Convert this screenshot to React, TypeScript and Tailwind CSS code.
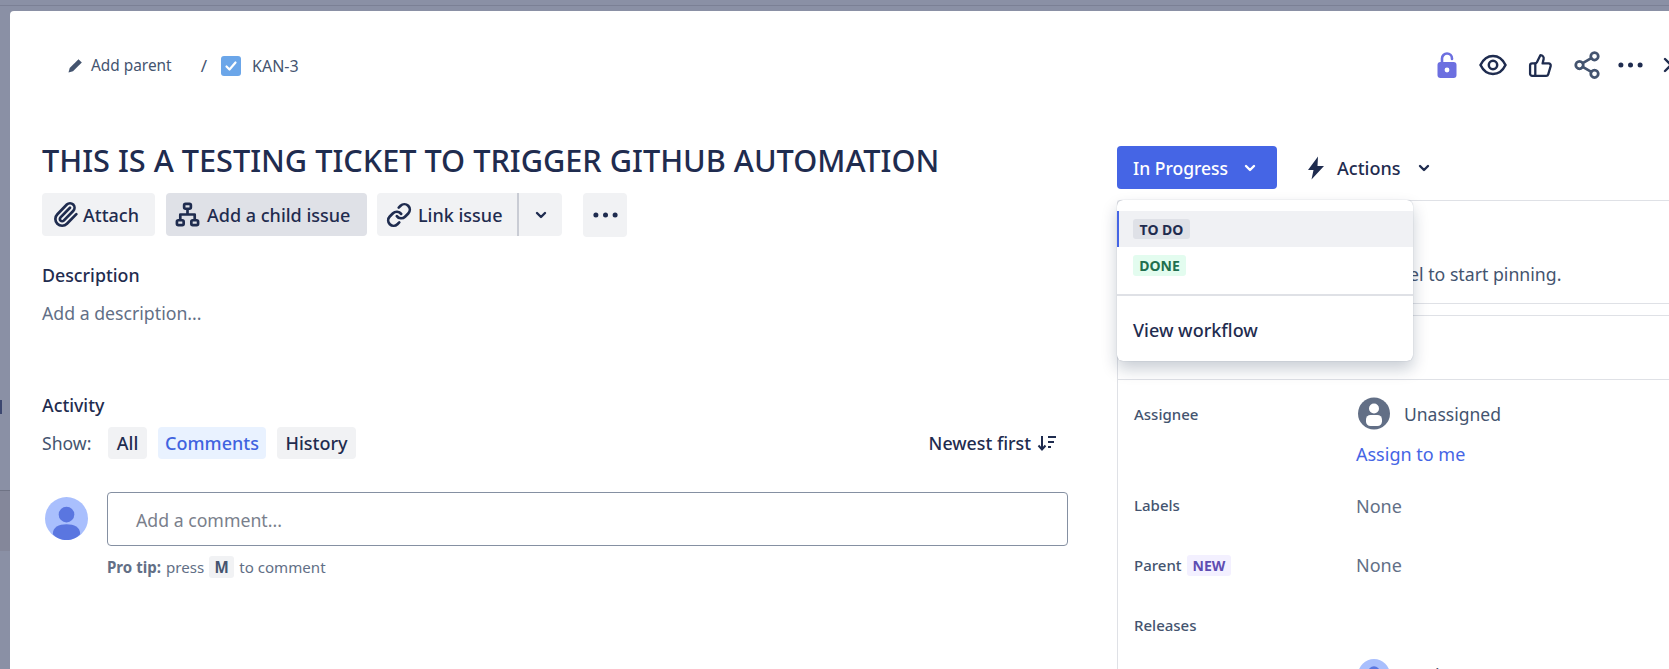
import React from "react";
import { Paperclip, Link as LinkIcon, ThumbsUp, Share2, X } from "lucide-react";

const Chevron = ({ className = "" }: { className?: string }) => (
  <svg viewBox="0 0 12 8" className={className} fill="none" stroke="currentColor" strokeWidth="2.4" strokeLinecap="round" strokeLinejoin="round">
    <path d="M2 2l4 4 4-4" />
  </svg>
);

const Dots = ({ className = "" }: { className?: string }) => (
  <svg viewBox="0 0 26 6" className={className} fill="currentColor">
    <circle cx="3" cy="3" r="2.6" />
    <circle cx="13" cy="3" r="2.6" />
    <circle cx="23" cy="3" r="2.6" />
  </svg>
);

const Avatar = ({ className = "" }: { className?: string }) => (
  <svg viewBox="0 0 44 44" className={className}>
    <circle cx="22" cy="22" r="22" fill="#a9bffd" />
    <circle cx="22" cy="18" r="8" fill="#5a76e0" />
    <path d="M8 38c0-7 6-10 14-10s14 3 14 10c-3.5 3.6-8.5 6-14 6s-10.500-2.400-14-6z" fill="#5a76e0" />
  </svg>
);

const Row = ({ label, children, h }: { label: React.ReactNode; children: React.ReactNode; h: string }) => (
  <div className={`flex ${h}`}>
    <div className="w-[222px] shrink-0 text-[15px] font-medium text-[#44546f] leading-[24px]">{label}</div>
    <div className="text-[18px] leading-[24px] text-[#626f86]">{children}</div>
  </div>
);

export default function App() {
  return (
    <div className="relative h-[669px] w-[1669px] overflow-hidden bg-[#8a90a5] pt-[11px] pl-[10px] [font-family:'Noto_Sans',sans-serif] text-[#172b4d]">
      <div className="absolute left-0 right-0 top-[5px] h-px bg-[#7b8095]" />
      <div className="absolute left-0 top-[400px] h-[14px] w-[2px] bg-[#3c4770]" />
      <div className="absolute left-0 top-[490px] h-px w-[10px] bg-[#6f7385]" />
      <div className="absolute left-0 top-[491px] h-[60px] w-[10px] bg-[#84879a]" />
      <div className="relative flex h-[658px] flex-col overflow-hidden rounded-tl-[4px] bg-white">
        <header className="flex h-[108px] shrink-0 items-center">
          <div className="ml-[57px] flex w-[1370px] shrink-0 items-center pt-[2px] text-[#44546f]">
            <svg viewBox="0 0 16 16" className="h-[16px] w-[16px] text-[#44546f]" fill="currentColor">
              <path d="M11.500 1.200l3.300 3.300-8.800 8.800-4.500 1.300 1.200-4.600z" />
            </svg>
            <span className="ml-[8px] text-[15.4px]">Add parent</span>
            <span className="ml-[29px] text-[17px]">/</span>
            <svg viewBox="0 0 20 20" className="ml-[14px] h-[20px] w-[20px]">
              <rect width="20" height="20" rx="3" fill="#6ba6e9" />
              <path d="M5.500 10.500l3 3 6-7" fill="none" stroke="#fff" strokeWidth="2.200" strokeLinecap="round" strokeLinejoin="round" />
            </svg>
            <span className="ml-[11px] text-[16px]">KAN-3</span>
          </div>
          <div className="flex shrink-0 items-center">
            <svg viewBox="0 0 20 26" className="h-[26px] w-[20px]">
              <path d="M5 11V6.500a5 5 0 0 1 10 0V7" fill="none" stroke="#6c6fe0" strokeWidth="2.600" strokeLinecap="round" />
              <rect x="0.500" y="10" width="19" height="16" rx="3" fill="#6c6fe0" />
              <circle cx="10" cy="18" r="2.400" fill="#fff" />
            </svg>
            <svg viewBox="0 0 28 22" className="ml-[22px] h-[22px] w-[28px]" fill="none" stroke="#1f2c4f" strokeWidth="2.500">
              <path d="M1.500 11C4.500 4.800 9 2 14 2s9.500 2.800 12.500 9c-3 6.200-7.500 9-12.500 9S4.500 17.200 1.500 11z" />
              <circle cx="14" cy="11" r="4.200" />
            </svg>
            <ThumbsUp className="ml-[21px] h-[25px] w-[25px] text-[#1f2c4f]" strokeWidth={2.2} />
            <Share2 className="ml-[19px] h-[30px] w-[30px] text-[#44546f]" strokeWidth={2.2} />
            <Dots className="ml-[16px] h-[6px] w-[25px] text-[#1f2c4f]" />
            <X className="ml-[16px] h-[24px] w-[24px] shrink-0 text-[#1f2c4f]" strokeWidth={2.4} />
          </div>
        </header>

        <div className="flex min-h-0 flex-1">
          <main className="w-[1107px] shrink-0 pl-[32px]">
            <h1 className="mt-[19px] whitespace-nowrap text-[30.7px] font-medium leading-[44px] text-[#1f2c4f]">
              THIS IS A TESTING TICKET TO TRIGGER GITHUB AUTOMATION
            </h1>
            <div className="mt-[11px] flex items-start">
              <button className="flex h-[43px] w-[113px] items-center gap-[4px] rounded-[4px] bg-[#f1f2f4] pl-[10px] text-[18px] font-medium text-[#1f2c4f]">
                <Paperclip className="h-[27px] w-[27px]" strokeWidth={2.4} />
                <span className="mt-[2px]">Attach</span>
              </button>
              <button className="ml-[11px] flex h-[43px] w-[201px] items-center gap-[7px] rounded-[4px] bg-[#dfe1e7] pl-[9px] text-[18px] font-medium text-[#1f2c4f]">
                <svg viewBox="0 0 26 26" className="h-[25px] w-[25px]" fill="none" stroke="currentColor" strokeWidth="2.800" strokeLinejoin="round">
                  <rect x="9.500" y="2" width="7" height="5" rx="1.500" />
                  <rect x="2" y="19" width="7" height="5" rx="1.500" />
                  <rect x="17" y="19" width="7" height="5" rx="1.500" />
                  <path d="M13 7v6M5.500 19v-6h15v6" />
                </svg>
                <span className="mt-[2px]">Add a child issue</span>
              </button>
              <div className="ml-[10px] flex h-[43px] w-[185px] rounded-[4px] bg-[#f1f2f4] text-[18px] font-medium text-[#1f2c4f]">
                <button className="flex w-[140px] items-center gap-[6px] pl-[9px]">
                  <LinkIcon className="h-[26px] w-[26px]" strokeWidth={2.5} />
                  <span className="mt-[2px]">Link issue</span>
                </button>
                <div className="w-[2px] bg-[#c9ccd4]" />
                <button className="flex flex-1 items-center justify-center">
                  <Chevron className="h-[8px] w-[12px]" />
                </button>
              </div>
              <button className="ml-[21px] flex h-[44px] w-[44px] items-center justify-center rounded-[4px] bg-[#f1f2f4] text-[#1f2c4f]">
                <Dots className="h-[6px] w-[25px]" />
              </button>
            </div>

            <h2 className="mt-[26px] text-[17.8px] font-medium leading-[24px] text-[#1f2c4f]">Description</h2>
            <p className="mt-[14px] text-[17.7px] leading-[24px] text-[#626f86]">Add a description...</p>

            <h2 className="mt-[68px] text-[17.8px] font-medium leading-[24px] text-[#1f2c4f]">Activity</h2>

            <div className="mt-[10px] flex items-center pr-[17px]">
              <span className="w-[66px] text-[17.6px] text-[#44546f]">Show:</span>
              <button className="flex h-[32px] w-[39px] items-center justify-center rounded-[4px] bg-[#f1f2f4] text-[18px] font-medium text-[#1f2c4f]">All</button>
              <button className="ml-[11px] flex h-[32px] w-[108px] items-center justify-center rounded-[4px] bg-[#e9f2ff] text-[18px] font-medium text-[#3f63e0]">Comments</button>
              <button className="ml-[11px] flex h-[32px] w-[79px] items-center justify-center rounded-[4px] bg-[#f1f2f4] text-[18px] font-medium text-[#1f2c4f]">History</button>
              <div className="ml-auto mr-[43px] flex items-center text-[17.8px] font-medium text-[#1f2c4f]">
                Newest first
                <svg viewBox="0 0 20 18" className="ml-[6px] h-[18px] w-[20px]" fill="none" stroke="currentColor" strokeWidth="2">
                  <path d="M5 2v13M1.500 11.500L5 15.500l3.500-4M11 3h8M11 8h6M11 13h3" />
                </svg>
              </div>
            </div>

            <div className="mt-[33px] flex items-start">
              <Avatar className="ml-[3px] mt-[5px] h-[43px] w-[43px] shrink-0" />
              <div className="ml-[19px] flex h-[54px] w-[961px] items-center rounded-[4px] border border-[#8590a2] pl-[28px] pt-[2px] text-[17.7px] text-[#7a7f8c]">
                Add a comment...
              </div>
            </div>
            <div className="ml-[65px] mt-[10px] flex items-center text-[15.1px] text-[#626f86]">
              <b className="font-bold">Pro tip:</b>
              <span className="ml-[5px]">press</span>
              <span className="mx-[5px] flex h-[22px] w-[25px] items-center justify-center rounded-[3px] bg-[#f1f2f4] font-bold text-[#44546f]">M</span>
              <span>to comment</span>
            </div>
          </main>

          <aside className="relative w-[600px] shrink-0">
            <div className="mt-[27px] flex items-center">
              <button className="flex h-[43px] w-[160px] items-center rounded-[4px] bg-[#4565e5] pl-[16px] text-[17.5px] font-medium text-white">
                <span className="mt-[2px]">In Progress</span>
                <Chevron className="ml-[16px] h-[8px] w-[12px]" />
              </button>
              <div className="ml-[30px] flex items-center text-[18px] font-medium text-[#1f2c4f]">
                <svg viewBox="0 0 18 24" className="h-[24px] w-[18px]" fill="#1f2c4f">
                  <path d="M11 0.500L1 14h5.500L4.500 23.500 17 10h-6.500z" />
                </svg>
                <span className="ml-[12px] mt-[2px]">Actions</span>
                <Chevron className="ml-[18px] h-[8px] w-[12px]" />
              </div>
            </div>

            <div className="mt-[11px] h-[104px] rounded-tl-[3px] border border-r-0 border-[#dfe1e6] pt-[61px] pl-[16px] text-[17.7px] leading-[24px] text-[#44546f]">
              Click on the pin next to a field label to start pinning.
            </div>
            <div className="mt-[11px] h-[65px] border border-r-0 border-[#dfe1e6]" />
            <div className="border-l border-[#dfe1e6] pl-[16px] pt-[22px]">
              <Row label="Assignee" h="h-[91px]">
                <div className="-mt-[5px] flex items-center">
                  <svg viewBox="0 0 32 32" className="ml-[2px] h-[33px] w-[32px]">
                    <circle cx="16" cy="16" r="16" fill="#626f86" />
                    <circle cx="16" cy="11" r="5" fill="#fff" />
                    <rect x="8" y="17.500" width="16" height="11" rx="4.500" fill="#fff" />
                  </svg>
                  <span className="ml-[14px] text-[17.5px] text-[#44546f]">Unassigned</span>
                </div>
                <div className="mt-[12px] text-[#4565e5]">Assign to me</div>
              </Row>
              <Row label="Labels" h="h-[60px]">
                <span className="relative top-px">None</span>
              </Row>
              <Row
                label={
                  <span className="flex items-center">
                    Parent
                    <span className="ml-[5px] rounded-[3px] bg-[#f3f0ff] px-[6px] text-[14px] font-bold leading-[21px] text-[#5e4db2]">NEW</span>
                  </span>
                }
                h="h-[60px]"
              >
                None
              </Row>
              <Row label="Releases" h="h-[46px]">{null}</Row>
              <Row label={<span className="mt-[4px] block">Reporter</span>} h="h-[40px]">
                <div className="flex items-center">
                  <Avatar className="ml-[2px] h-[32px] w-[32px]" />
                  <span className="ml-[14px] text-[#44546f]">Sanket M</span>
                </div>
              </Row>
            </div>

            <div className="absolute left-0 top-[81px] z-10 h-[161px] w-[296px] rounded-[6px] bg-white py-[11px] text-[#1f2c4f] shadow-[0_8px_16px_rgba(9,30,66,0.22),0_0_1px_rgba(9,30,66,0.35)]">
              <div className="flex h-[36px] items-center border-l-2 border-[#4565e5] bg-[#f0f1f4] pl-[14px]">
                <span className="flex h-[20px] w-[57px] items-center justify-center rounded-[3px] bg-[#dfe1e7] text-[14px] font-bold">TO DO</span>
              </div>
              <div className="flex h-[36px] items-center pl-[16px]">
                <span className="flex h-[21px] w-[53px] items-center justify-center rounded-[3px] bg-[#e3fcef] text-[14px] font-bold text-[#216e4e]">DONE</span>
              </div>
              <div className="mt-[11px] h-[2px] bg-[#dfe1e6]" />
              <div className="flex h-[66px] items-center pl-[16px] pt-[2px] text-[18px] font-medium">View workflow</div>
            </div>
          </aside>
        </div>
      </div>
    </div>
  );
}
